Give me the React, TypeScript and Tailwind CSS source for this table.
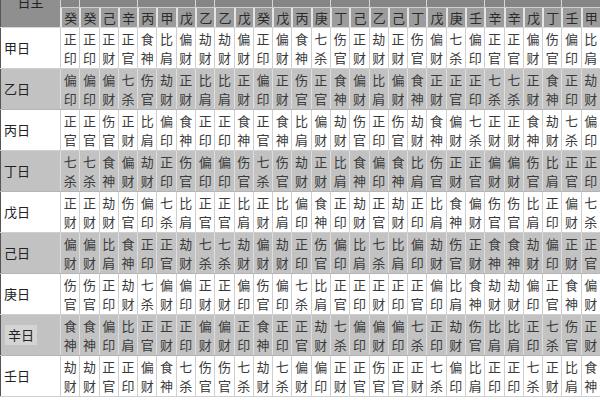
import React from "react";

const STEMS = ["甲", "乙", "丙", "丁", "戊", "己", "庚", "辛", "壬", "癸"];
const COLS = "癸癸己辛丙甲戊乙乙戊癸戊丙庚丁己乙己丁戊庚壬辛辛戊丁壬甲".split("");
const GROUPS = [1, 3, 3, 1, 3, 3, 2, 3, 3, 1, 3, 2];
const SPAN: Record<number, string> = { 1: "col-span-1", 2: "col-span-2", 3: "col-span-3" };

function god(d: number, s: number): string {
  const de = Math.floor(d / 2);
  const se = Math.floor(s / 2);
  const same = d % 2 === s % 2;
  const rel = (se - de + 5) % 5;
  if (rel === 0) return same ? "比肩" : "劫财";
  if (rel === 1) return same ? "食神" : "伤官";
  if (rel === 2) return same ? "偏财" : "正财";
  if (rel === 3) return same ? "七杀" : "正官";
  return same ? "偏印" : "正印";
}

const GRID = "grid grid-cols-[60px_repeat(28,minmax(0,1fr))] w-[600px]";

export default function App() {
  return (
    <div className="w-[600px] h-[400px] overflow-hidden bg-white font-['Noto_Sans_CJK_SC','Noto_Sans',sans-serif] text-[#333]">
      {/* header */}
      <div className={GRID + " h-[28px] border-b border-[#d8d8d8]"}>
        <div className="row-span-2 bg-[#8f8f8f] border-l border-[#555] flex justify-center items-start overflow-hidden">
          <span className="text-[13px] leading-[13px] -mt-[5px] text-[#222]">日主</span>
        </div>
        <div className="col-span-28 grid grid-cols-[repeat(28,minmax(0,1fr))] h-[8px]">
          {GROUPS.map((g, i) => (
            <div key={i} className={SPAN[g] + " bg-[#858585] border-l border-[#d6d6d6] border-b border-b-[#cfcfcf]"} />
          ))}
        </div>
        {COLS.map((c, i) => (
          <div
            key={i}
            className="h-[19px] bg-[#9c9c9c] border-l-2 border-[#e4e4e4] flex items-center justify-center text-[13px] leading-none text-[#2a2a2a]"
          >
            {c}
          </div>
        ))}
      </div>
      {/* body */}
      {STEMS.slice(0, 9).map((d, ri) => {
        const gray = ri % 2 === 1;
        return (
          <div
            key={d}
            className={
              GRID +
              " h-[41px] border-b " +
              (gray ? "bg-[#c2c2c2] border-[#b5b5b5]" : "bg-white border-[#cfcfcf]")
            }
          >
            <div className="border-l border-[#555] flex items-center pl-[3px] text-[13px] text-[#222]">
              {d === "辛" ? (
                <span className="bg-[#d4d4d4] px-[3px] ml-[1px]">辛日</span>
              ) : (
                <span>{d}日</span>
              )}
            </div>
            {COLS.map((c, ci) => {
              const g = god(ri, STEMS.indexOf(c));
              return (
                <div
                  key={ci}
                  className={
                    "flex flex-col items-center justify-center text-[13px] leading-[19px] text-[#3a3a3a] border-l " +
                    (gray ? "border-[#dedede]" : "border-[#cfcfcf]")
                  }
                >
                  <span>{g[0]}</span>
                  <span>{g[1]}</span>
                </div>
              );
            })}
          </div>
        );
      })}
    </div>
  );
}
